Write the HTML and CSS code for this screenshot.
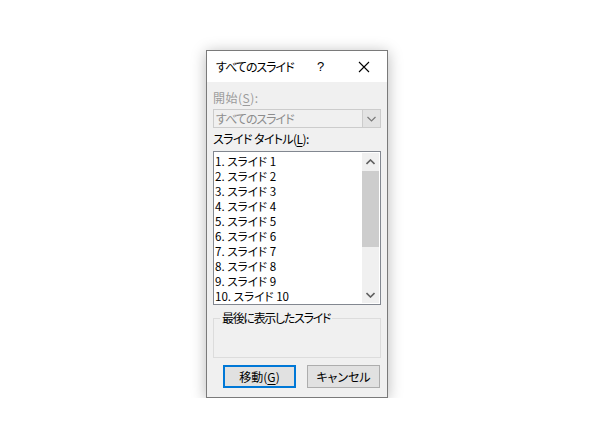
FILE: index.html
```html
<!DOCTYPE html>
<html lang="ja">
<head>
<meta charset="utf-8">
<link rel="stylesheet" href="styles.css">
</head>
<body>
<div class="stage">
  <div class="dialog">
    <div class="titlebar">
      <span class="title">すべてのスライド</span>
      <span class="help">?</span>
      <span class="close">
        <svg width="12" height="12" viewBox="0 0 12 12"><path d="M1 1 L11 11 M11 1 L1 11" stroke="#000" stroke-width="1.1" fill="none"/></svg>
      </span>
    </div>
    <div class="body">
      <div class="label disabled">開始(<u>S</u>):</div>
      <div class="combo">
        <span class="combo-text">すべてのスライド</span>
        <span class="combo-btn">
          <svg width="9" height="6" viewBox="0 0 9 6"><path d="M0.5 1 L4.5 5 L8.5 1" stroke="#7a7a7a" stroke-width="1.2" fill="none"/></svg>
        </span>
      </div>
      <div class="label label2">スライド タイトル(<u>L</u>):</div>
      <div class="listbox">
        <div class="items">
          <div class="item">1. スライド 1</div>
          <div class="item">2. スライド 2</div>
          <div class="item">3. スライド 3</div>
          <div class="item">4. スライド 4</div>
          <div class="item">5. スライド 5</div>
          <div class="item">6. スライド 6</div>
          <div class="item">7. スライド 7</div>
          <div class="item">8. スライド 8</div>
          <div class="item">9. スライド 9</div>
          <div class="item">10. スライド 10</div>
        </div>
        <div class="scrollbar">
          <div class="sb-btn">
            <svg width="9" height="6" viewBox="0 0 9 6"><path d="M0.5 5 L4.5 1 L8.5 5" stroke="#606060" stroke-width="1.6" fill="none"/></svg>
          </div>
          <div class="sb-track">
            <div class="sb-thumb"></div>
          </div>
          <div class="sb-btn">
            <svg width="9" height="6" viewBox="0 0 9 6"><path d="M0.5 1 L4.5 5 L8.5 1" stroke="#606060" stroke-width="1.6" fill="none"/></svg>
          </div>
        </div>
      </div>
      <div class="group">
        <span class="group-label">最後に表示したスライド</span>
      </div>
      <div class="buttons">
        <div class="btn default">移動(<u>G</u>)</div>
        <div class="btn">キャンセル</div>
      </div>
    </div>
  </div>
</div>
</body>
</html>
```
FILE: styles.css
```css
html, body {
  margin: 0;
  padding: 0;
  background: #ffffff;
}
body {
  font-family: "Noto Sans CJK JP", "Noto Sans", sans-serif;
  font-size: 12px;
  font-feature-settings: "palt";
  color: #000;
}
.stage {
  padding: 50px 0 0 206px;
}
.dialog {
  width: 180px;
  border: 1px solid #7a7a7a;
  background: #f0f0f0;
  box-shadow: 0 2px 14px rgba(0, 0, 0, 0.28);
}
.titlebar {
  height: 31px;
  background: #ffffff;
  display: flex;
  align-items: center;
}
.title {
  margin-left: 9px;
  width: 101px;
  line-height: 16px;
  letter-spacing: -1px;
  white-space: nowrap;
}
.help {
  font-family: "Liberation Sans", sans-serif;
  font-size: 13px;
  width: 7px;
}
.close {
  margin-left: 34px;
  display: flex;
  align-items: center;
}
.body {
  padding: 8px 6px 9px 6px;
}
.label {
  line-height: 16px;
  height: 16px;
  white-space: nowrap;
}
.label u, .btn u {
  text-underline-offset: 2px;
}
.disabled {
  color: #9b9b9b;
  letter-spacing: 0.5px;
}
.combo {
  margin-top: 3px;
  height: 17px;
  border: 1px solid #cccccc;
  background: #f0f0f0;
  display: flex;
  align-items: stretch;
}
.combo-text {
  flex: 1;
  padding-left: 2px;
  line-height: 17px;
  color: #8d8d8d;
  letter-spacing: -1px;
  white-space: nowrap;
}
.combo-btn {
  width: 17px;
  border-left: 1px solid #cccccc;
  background: #e3e3e3;
  display: flex;
  align-items: center;
  justify-content: center;
}
.label2 {
  margin-top: 3px;
  letter-spacing: -0.6px;
}
.listbox {
  margin-top: 4px;
  height: 152px;
  border: 1px solid #828790;
  background: #ffffff;
  display: flex;
}
.items {
  flex: 1;
  padding: 2px 0 0 1px;
  font-size: 11.6px;
}
.item {
  line-height: 15px;
  height: 15px;
  white-space: nowrap;
}
.scrollbar {
  width: 17px;
  margin: 1px 1px 1px 0;
  background: #f0f0f0;
  display: flex;
  flex-direction: column;
}
.sb-btn {
  height: 17px;
  display: flex;
  align-items: center;
  justify-content: center;
}
.sb-track {
  flex: 1;
}
.sb-thumb {
  margin-top: 1px;
  height: 76px;
  background: #cdcdcd;
}
.group {
  margin-top: 13px;
  height: 38px;
  border: 1px solid #dcdcdc;
  position: relative;
}
.group-label {
  position: absolute;
  left: 6px;
  top: -9px;
  padding: 0 2px;
  background: #f0f0f0;
  line-height: 16px;
  letter-spacing: -1.3px;
  white-space: nowrap;
}
.buttons {
  margin-top: 7px;
  display: flex;
  justify-content: flex-end;
  gap: 11px;
  padding-right: 1px;
}
.btn {
  width: 71px;
  height: 21px;
  border: 1px solid #adadad;
  background: #e1e1e1;
  display: flex;
  align-items: center;
  justify-content: center;
  line-height: 16px;
}
.btn.default {
  width: 69px;
  height: 19px;
  border: 2px solid #0078d7;
}
```
